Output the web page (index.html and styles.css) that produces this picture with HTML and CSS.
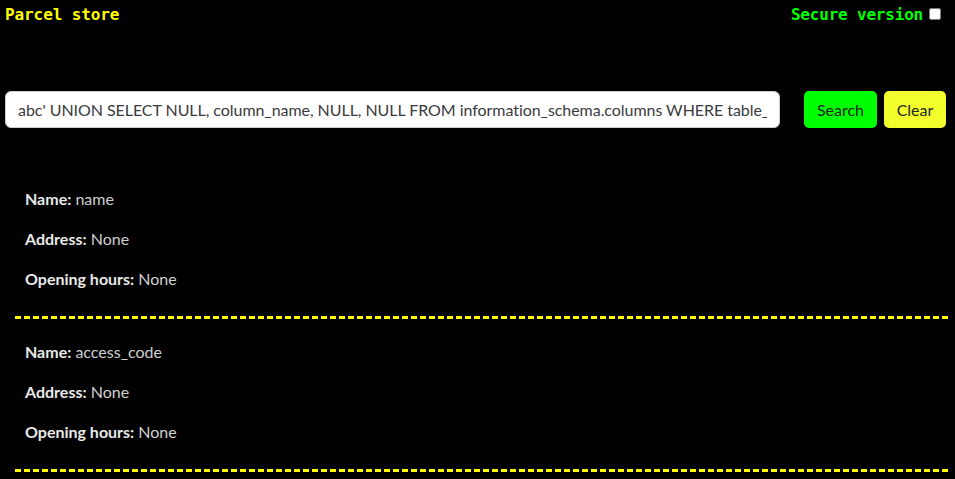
FILE: index.html
```html
<!DOCTYPE html>
<html lang="en">
<head>
<meta charset="utf-8">
<title>Parcel store</title>
<link rel="stylesheet" href="styles.css">
</head>
<body>
<header class="topbar">
  <span class="brand">Parcel store</span>
  <label class="secure">Secure version <input type="checkbox" class="secure-box"></label>
</header>
<form class="search-row">
  <input class="search-input" type="text" value="abc' UNION SELECT NULL, column_name, NULL, NULL FROM information_schema.columns WHERE table_name = 'users' --">
  <div class="buttons">
    <button type="button" class="btn btn-search">Search</button>
    <button type="button" class="btn btn-clear">Clear</button>
  </div>
</form>
<main class="results">
  <section class="entry">
    <div class="row"><span class="label">Name:</span> name</div>
    <div class="row"><span class="label">Address:</span> None</div>
    <div class="row"><span class="label">Opening hours:</span> None</div>
  </section>
  <section class="entry">
    <div class="row"><span class="label">Name:</span> access_code</div>
    <div class="row"><span class="label">Address:</span> None</div>
    <div class="row"><span class="label">Opening hours:</span> None</div>
  </section>
</main>
</body>
</html>
```
FILE: styles.css
```css
html, body {
  margin: 0;
  padding: 0;
  background: #000;
}
body {
  font-family: Lato, "Open Sans", sans-serif;
  color: #e6e6e6;
  overflow: hidden;
}
.topbar {
  display: flex;
  justify-content: space-between;
  align-items: center;
  padding: 3px 14px 0 5px;
  height: 22px;
  font-family: "DejaVu Sans Mono", "Liberation Mono", monospace;
  font-weight: bold;
  font-size: 16px;
}
.brand {
  color: #ffff00;
  letter-spacing: -0.1px;
}
.secure {
  color: #00ff00;
  display: flex;
  align-items: center;
  gap: 6px;
  letter-spacing: -0.2px;
}
.secure-box {
  margin: 0;
  width: 12px;
  height: 12px;
}
.search-row {
  display: flex;
  align-items: center;
  margin: 66px 9px 0 5px;
}
.search-input {
  flex: 1;
  height: 37px;
  box-sizing: border-box;
  margin: 0 24px 0 0;
  padding: 0 12px;
  border: 1px solid #ccc;
  border-radius: 6px;
  background: #fff;
  color: #3a3a40;
  font-family: Lato, "Open Sans", sans-serif;
  font-size: 16px;
  letter-spacing: -0.05px;
}
.buttons {
  display: flex;
  gap: 7px;
}
.btn {
  height: 37px;
  box-sizing: border-box;
  border: none;
  border-radius: 5px;
  padding: 0 12px;
  font-family: Lato, "Open Sans", sans-serif;
  font-size: 16px;
  color: #222;
}
.btn-search {
  background: #00ff00;
  width: 73px;
}
.btn-clear {
  background: #f2ff2c;
  width: 62px;
}
.results {
  margin-top: 38px;
}
.entry {
  margin: 0 4px 0 15px;
  padding: 13px 0 20px 10px;
  background: repeating-linear-gradient(90deg, #ffff00 0 6px, transparent 6px 9px) left bottom / 100% 3px no-repeat;
}
.row {
  height: 40px;
  line-height: 40px;
  font-size: 16px;
  color: #d0d0d0;
}
.label {
  font-weight: bold;
  color: #e8e8e8;
}
```
